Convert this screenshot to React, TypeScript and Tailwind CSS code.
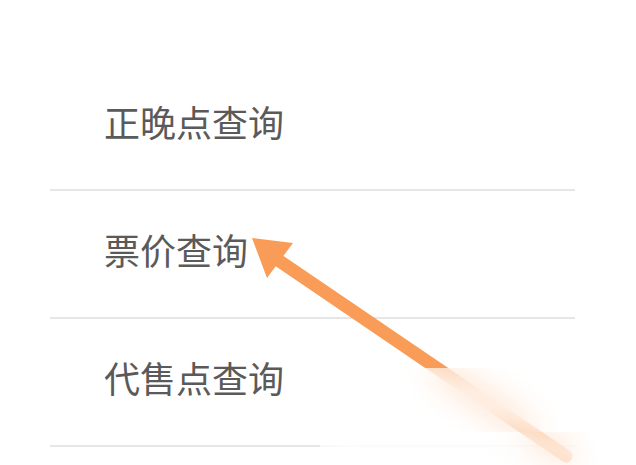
const items = ["正晚点查询", "票价查询", "代售点查询"];

export default function App() {
  return (
    <div
      className="relative w-[636px] h-[465px] overflow-hidden bg-white"
      style={{ fontFamily: '"Noto Sans CJK SC", "Noto Sans", sans-serif' }}
    >
      <div className="pt-[103px] pl-[50px] w-[575px]">
        {items.map((label, i) => (
          <div key={label} className={i === 0 ? "" : "pt-10"}>
            <div className="pl-[54px] pb-[50px] text-[36px] leading-none text-[#5a5a5a]">
              {label}
            </div>
            <div className="h-[2px] bg-[#e6e6e6]" />
          </div>
        ))}
      </div>

      {/* arrow annotation */}
      <svg
        className="absolute inset-0 pointer-events-none"
        width="636"
        height="465"
        viewBox="0 0 636 465"
      >
        <line
          x1="272"
          y1="256"
          x2="566"
          y2="456"
          stroke="#f99c57"
          strokeWidth="13"
          strokeLinecap="round"
        />
        <polygon points="252,238 293,243 267,278" fill="#f99c57" />
      </svg>

      {/* faded watermark patch */}
      <div className="absolute left-[392px] top-[368px] right-0 h-[64px] bg-white/50 backdrop-blur-lg" />
      <div className="absolute left-[320px] top-[432px] right-0 bottom-0 bg-white/50 backdrop-blur-lg" />
    </div>
  );
}
